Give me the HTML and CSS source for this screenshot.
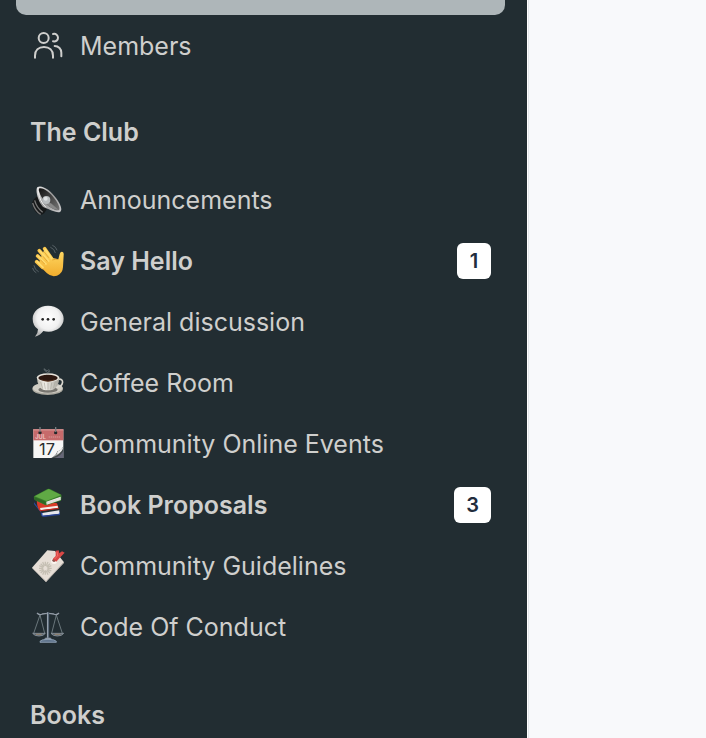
FILE: index.html
```html
<!DOCTYPE html>
<html lang="en">
<head>
<meta charset="utf-8">
<meta name="viewport" content="width=device-width, initial-scale=1">
<title>The Club</title>
<link rel="stylesheet" href="styles.css">
</head>
<body>
<div class="app">
<nav class="sidebar" aria-label="Spaces">
  <div class="selected"></div>
  <a class="item" href="#">
    <svg class="icon" viewBox="96 90 96 96" fill="none" stroke="#cfcfcd" stroke-width="6" stroke-linecap="round" aria-hidden="true"><circle cx="131" cy="114" r="15"/><path d="M105 173v-6c0-16 11-26 27-26s27 10 27 26v6M159 102c9-2 15 4 15 11s-6 13-15 11M164 138c12 0 20 9 20 20v11"/></svg>
    <span class="label">Members</span>
  </a>

  <section class="group">
  <h2 class="heading">The Club</h2>
  <a class="item" href="#">
    <svg class="icon" viewBox="36 27 96 96" aria-hidden="true">
      <defs><linearGradient id="rim" x1="0" y1="0" x2="1" y2="1"><stop stop-color="#eee"/><stop offset=".45" stop-color="#999"/><stop offset="1" stop-color="#c9c9cb"/></linearGradient><linearGradient id="cone" x1="0" y1="0" x2="1" y2="1"><stop stop-color="#111"/><stop offset="1" stop-color="#777"/></linearGradient></defs>
      <path d="M42 73q-6 6-5 16 4 22 22 30 8 2 14-5l8-12-30-38z" fill="#161819"/>
      <path d="M38 84q7 24 24 34M44 76q6 22 24 36" fill="none" stroke="#777" stroke-width="4"/>
      <path d="M53 36c13-7 39 10 55 33 14 18 20 36 13 41-8 5-25-3-50-13C55 84 44 43 53 36z" fill="url(#rim)"/>
      <path d="M58 40c12-3 31 11 46 31 13 17 17 31 13 34-7 4-25-5-38-19C65 71 52 45 58 40z" fill="url(#cone)"/>
      <path d="M74 82l19 3 22 19c-10 2-27-6-41-22z" fill="#888"/>
      <circle cx="79" cy="75" r="12" fill="#b9bdbf"/><circle cx="77" cy="71" r="6" fill="#dfe2e3"/>
      <path d="M55 48Q58 79 78 97" fill="none" stroke="#eee" stroke-width="3"/>
    </svg>
    <span class="label">Announcements</span>
  </a>
  <a class="item unread" href="#">
    <svg class="icon" viewBox="36 27 96 96" aria-hidden="true">
      <defs><linearGradient id="hand" x1="0" y1="0" x2="0" y2="1"><stop stop-color="#ffdc68"/><stop offset="1" stop-color="#f2ad2d"/></linearGradient></defs>
      <g fill="none" stroke="#566065" stroke-width="3" stroke-linecap="round"><path d="M92 34q12 5 14 16M98 28q10 4 13 14M42 89q2 13 13 18M38 97q2 9 10 13"/></g>
      <path d="M68 94L50 77M76 82L53 60M84 74L58 44M94 67L74 38" stroke="#f8c44b" stroke-width="11" stroke-linecap="round"/>
      <path d="M75 37L99 66l16 4 4-16q3-9 9-6 4 2 3 10l-2 35q-1 20-18 26-17 5-30-7L55 86l8-22z" fill="url(#hand)"/>
      <path d="M54 60l24 24M60 45l26 30M76 40l19 28M52 77l17 17" stroke="#ffdc70" stroke-width="5" stroke-linecap="round"/>
      <path d="M61 71l13 13M69 61l13 15M72 47l14 18M97 72q10-4 18-1" fill="none" stroke="#d89222" stroke-width="2"/>
    </svg>
    <span class="label">Say Hello</span><span class="badge">1</span>
  </a>
  <a class="item" href="#">
    <svg class="icon" viewBox="36 27 96 96" aria-hidden="true">
      <defs><radialGradient id="bubble" cx=".5" cy=".4" r=".6"><stop stop-color="#fff"/><stop offset=".6" stop-color="#f1f1f1"/><stop offset="1" stop-color="#b5b5b5"/></radialGradient></defs>
      <path d="M84 26c27 0 47 17 47 39s-20 38-45 39q-9 0-16-2-8 12-25 17 9-9 9-22Q38 86 38 65c0-22 20-39 46-39z" fill="url(#bubble)"/>
      <g fill="#252525"><circle cx="68" cy="67" r="4"/><circle cx="84" cy="67" r="4"/><circle cx="101" cy="67" r="4"/></g>
    </svg>
    <span class="label">General discussion</span>
  </a>
  <a class="item" href="#">
    <svg class="icon" viewBox="36 27 96 96" aria-hidden="true">
      <defs><linearGradient id="cup"><stop stop-color="#bbb8ae"/><stop offset=".35" stop-color="#f2f0e9"/><stop offset="1" stop-color="#a5a39b"/></linearGradient></defs>
      <ellipse cx="83" cy="93" rx="46" ry="18" fill="#aaa89f"/><ellipse cx="83" cy="90" rx="45" ry="16" fill="#d0cdc4"/><ellipse cx="84" cy="95" rx="29" ry="9" fill="#77756f"/>
      <path d="M115 64c18-4 18 22-7 24" fill="none" stroke="#d9d6ce" stroke-width="5"/>
      <path d="M51 58q1 30 18 37 15 4 30 0 18-8 19-37z" fill="url(#cup)"/>
      <path d="M62 72l6 20M73 74l3 20M84 74v21M95 74l-3 20M106 71l-6 20" stroke="#a9a79d" stroke-width="2"/>
      <ellipse cx="84" cy="59" rx="34" ry="13" fill="#e8e4dc"/><ellipse cx="84" cy="60" rx="29" ry="10" fill="#2c1710"/><path d="M61 63q23 11 46 0-9 8-23 8t-23-8" fill="#5f3922"/>
      <path d="M80 49c9-9-10-8-7-17 5 10 16 1 13 15M86 34l3 7" fill="none" stroke="#7f888b" stroke-width="2"/>
    </svg>
    <span class="label">Coffee Room</span>
  </a>
  <a class="item" href="#">
    <svg class="icon" viewBox="36 27 96 96" aria-hidden="true">
      <path d="M40 31h90v86H40z" fill="#f6f6f5"/><path d="M40 31h90v33H40z" fill="#c66a6b"/><path d="M40 31h90v4H40z" fill="#d18988"/>
      <text x="46" y="60" class="month">JUL</text><path d="M86 54h36" stroke="#cf8281" stroke-width="6" stroke-dasharray="4 2"/>
      <text x="57" y="108" class="date">17</text>
      <path d="M94 117q15-8 18-20 12-2 18-15v35z" fill="#454b4c"/><path d="M92 117q18-7 21-19 10-2 17-13-7 23-38 32z" fill="#b6b7b6"/><path d="M112 98q10-3 18-13-5 15-18 21z" fill="#eee"/><path d="M104 117q19-7 26-22v22z" fill="#667"/>
      <circle cx="60" cy="41" r="5" fill="#26292b"/><circle cx="107" cy="41" r="5" fill="#26292b"/><path d="M60 24v15M107 24v15" stroke="#777d80" stroke-width="4"/>
    </svg>
    <span class="label">Community Online Events</span>
  </a>
  <a class="item unread" href="#">
    <svg class="icon" viewBox="36 27 96 96" aria-hidden="true">
      <path d="M43 61q-2 8 4 12l18 26 55-3v5l-51 9q-7-3-6-12L42 72z" fill="#2749a5"/><path d="M67 99l51-8v10l-50 6z" fill="#e4e5ec"/><path d="M66 107l54-6v4l-50 6z" fill="#263f8e"/>
      <path d="M50 57l61 13 5 15-55 9q-10-7-11-37z" fill="#d83b29"/><path d="M60 84l53-7 1 7-52 7z" fill="#f5eeea"/><path d="M59 91l57-8v4l-55 7z" fill="#b92821"/>
      <path d="M42 49l40-22q3-1 8 0l34 17q2 7-1 18l-44 14q-4 0-8-3L44 60q-4-4-2-11z" fill="#397e2c"/><path d="M44 49l42-22 37 18-44 18z" fill="#60a945"/><path d="M79 65l43-15v10L80 74z" fill="#f4f2ef"/><path d="M43 51l34 14v9L44 59z" fill="#2e6a26"/><path d="M80 68l41-14M81 71l40-13" stroke="#aaa" stroke-width="1"/>
    </svg>
    <span class="label">Book Proposals</span><span class="badge">3</span>
  </a>
  <a class="item" href="#">
    <svg class="icon" viewBox="36 27 96 96" aria-hidden="true">
      <path d="M36 80l46-52 23 2 27 34-54 59z" fill="#e6ded6"/><path d="M36 80l42 40 54-58v4l-54 57-42-41z" fill="#bcb4ae"/>
      <g stroke="#c5bfb3" stroke-width="4"><path d="M76 62v13M76 88v13M57 82h13M82 82h13M62 68l10 10M80 86l10 10M62 96l10-10M80 78l10-10M68 63l5 11M79 90l5 11M58 74l11 5M83 85l11 5M58 90l11-5M83 79l11-5M68 101l5-11M79 74l5-11"/></g>
      <circle cx="102" cy="60" r="9" fill="#faf4ee"/><circle cx="102" cy="58" r="5" fill="#8c5550"/>
      <path d="M98 54l9-9 0-16 9-1 2 9 8-6 8 4-16 17-9 10z" fill="#d94846"/><path d="M104 54l10-11M111 33l2 11" stroke="#f66c64" stroke-width="3"/>
    </svg>
    <span class="label">Community Guidelines</span>
  </a>
  <a class="item" href="#">
    <svg class="icon" viewBox="36 27 96 96" fill="none" stroke="#758290" stroke-width="2.5" aria-hidden="true">
      <path d="M60 39L41 94M60 39l14 55M109 39L95 94M109 39l18 55" stroke="#78858a"/>
      <path d="M51 33q8 8 16 3 17-4 34 0 8 5 16-3" stroke="#929ba6" stroke-width="4"/>
      <path d="M84 31v78" stroke="#4e5e70" stroke-width="7"/><path d="M83 31v78" stroke="#a5afba" stroke-width="3"/>
      <path d="M38 94h38q-5 8-19 8t-19-8zM93 94h38q-5 8-19 8t-19-8z" fill="#59636c" stroke="#8d969f"/><path d="M48 97h17M104 97h17" stroke="#a18b70"/>
      <path d="M76 108h16l3 6H73z" fill="#a5afba"/><path d="M60 118q3-6 24-6t25 6v3H60z" fill="#61758d" stroke="#93a5b8"/>
    </svg>
    <span class="label">Code Of Conduct</span>
  </a>
  </section>

  <section class="group">
  <h2 class="heading">Books</h2>
  </section>
</nav>
<main class="content"></main>
</div>
</body>
</html>
```
FILE: styles.css
```css
* { box-sizing: border-box; }

body {
  margin: 0;
  background: #f8f9fb;
  font-family: Inter, "Liberation Sans", sans-serif;
}

.app {
  display: flex;
  height: 100vh;
  overflow: hidden;
}

.sidebar {
  width: min(75vw, 528px);
  flex: none;
  padding: 0 22px 0 16px;
  overflow: hidden;
  background: #222d32;
  border-right: 1px solid #fff;
  color: #cfcfcd;
}

.content {
  flex: 1;
  border-left: 1px solid #e4e6eb;
}

.selected {
  height: 15px;
  border-radius: 0 0 10px 10px;
  background: #aeb6b9;
}

.item {
  display: flex;
  align-items: center;
  gap: 16px;
  height: 61px;
  padding: 0 14px 0 16px;
  color: inherit;
  font-size: 25px;
  font-weight: 400;
  line-height: 32px;
  text-decoration: none;
}

.icon {
  flex: none;
  width: 32px;
  height: 32px;
  overflow: visible;
}

.label {
  flex: 1;
  white-space: nowrap;
}

.unread { font-weight: 600; }

.group { padding-bottom: 2px; }

.heading {
  margin: 0;
  padding: 40px 14px 21px;
  font-size: 25px;
  font-weight: 600;
  line-height: 32px;
}

.badge {
  min-width: 34px;
  padding: 0 12px;
  border-radius: 6px;
  background: #fff;
  color: #222d3d;
  font-size: 20px;
  line-height: 36px;
  text-align: center;
}

.month {
  fill: #f0c9c8;
  font-size: 17px;
  font-weight: 600;
}

.date {
  fill: #2b2d2e;
  font-size: 49px;
  font-weight: 400;
}
```
